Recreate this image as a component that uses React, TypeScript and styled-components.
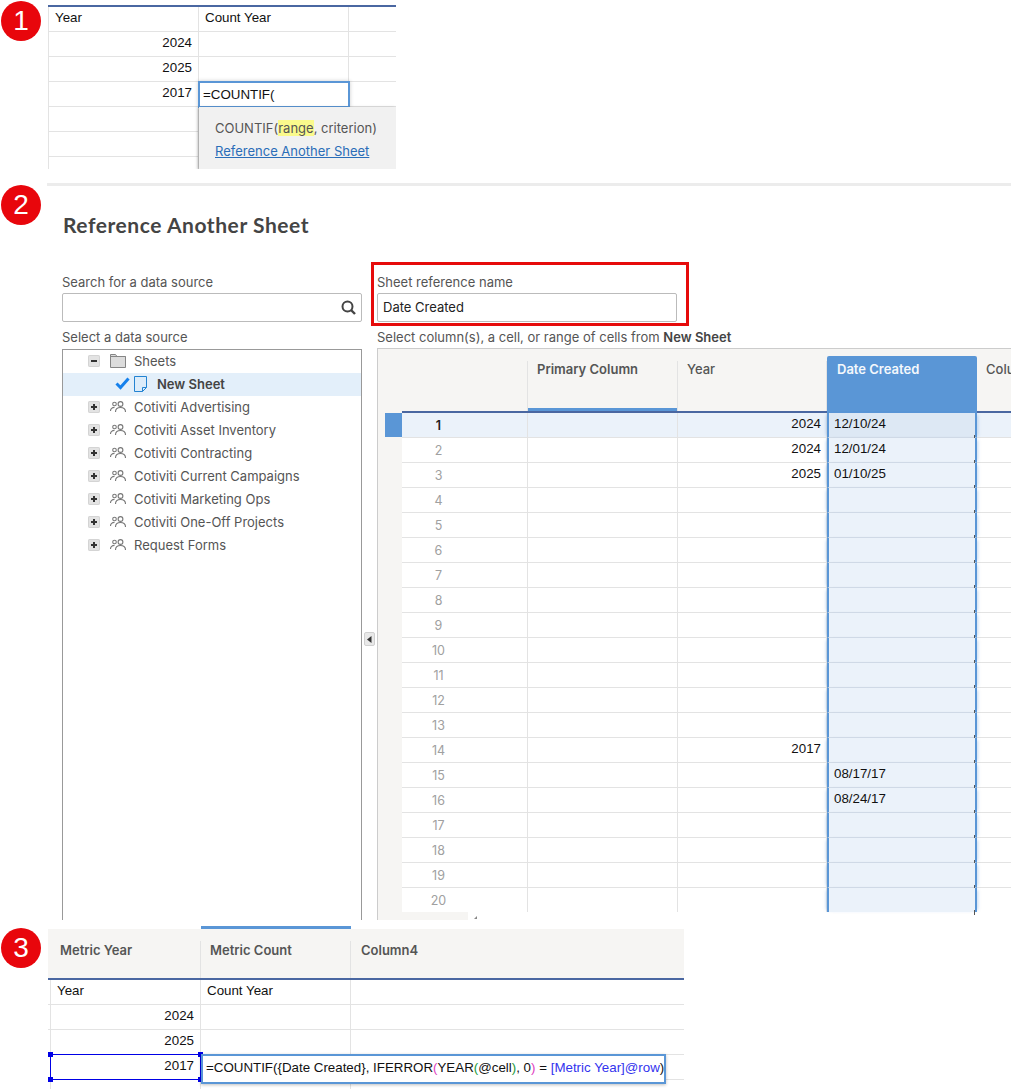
import styled, { createGlobalStyle } from "styled-components";

const CELL_FONT = `"Liberation Sans", Arial, sans-serif`;
const UI_FONT = `Inter, "Noto Sans", sans-serif`;
const BLUE = "#5a96d6";
const NAVY = "#4a67a1";
const LINE = "#e3e3e3";
const HEAD = "#f6f5f3";

const GlobalStyle = createGlobalStyle`
  html, body {
    margin: 0;
    padding: 0;
    background: #fff;
  }
  * {
    box-sizing: border-box;
  }
`;

const PlusBox = ({ minus }: { minus?: boolean }) => (
  <StyledToggle>
    <svg width="12" height="12" viewBox="0 0 12 12">
      <path d="M3 6h6" stroke="#333" strokeWidth="2" />
      {!minus && <path d="M6 3v6" stroke="#333" strokeWidth="2" />}
    </svg>
  </StyledToggle>
);

const FolderIcon = () => (
  <svg width="16" height="14" viewBox="0 0 16 14">
    <path d="M.5.5h5l1.5 2h8.500v11H.5z" fill="#dcdcdc" stroke="#858585" />
    <path d="M.5 2.500h15" stroke="#858585" />
  </svg>
);

const PeopleIcon = () => (
  <svg width="16" height="12" viewBox="0 0 16 12" fill="none" stroke="#777" strokeWidth="1.100">
    <circle cx="4.5" cy="3" r="1.8" />
    <circle cx="10.5" cy="3" r="2.4" />
    <path d="M.5 10c0-2.400 1.600-3.600 4-3.600" />
    <path d="M5.500 11c0-3 2-4.500 5-4.500s5 1.500 5 4.500" />
  </svg>
);

const CheckIcon = () => (
  <svg width="15" height="13" viewBox="0 0 15 13">
    <path d="M1.500 6.500l4 4 8-9" fill="none" stroke="#1580ec" strokeWidth="3" />
  </svg>
);

const SheetIcon = () => (
  <svg width="13" height="16" viewBox="0 0 13 16">
    <path d="M.5.5h12v11l-4 4H.5z" fill="#dcecfa" stroke="#2383d2" />
    <path d="M12.500 11.500h-4v4" fill="none" stroke="#2383d2" />
  </svg>
);

const SearchIcon = () => (
  <svg width="15" height="15" viewBox="0 0 15 15" fill="none" stroke="#444" strokeWidth="2">
    <circle cx="6.500" cy="6.500" r="5" />
    <path d="M10 10l4 4" strokeWidth="2.400" />
  </svg>
);

const workspaces = [
  "Cotiviti Advertising",
  "Cotiviti Asset Inventory",
  "Cotiviti Contracting",
  "Cotiviti Current Campaigns",
  "Cotiviti Marketing Ops",
  "Cotiviti One-Off Projects",
  "Request Forms",
];

const years: Record<number, string> = { 1: "2024", 2: "2024", 3: "2025", 14: "2017" };
const dates: Record<number, string> = { 1: "12/10/24", 2: "12/01/24", 3: "01/10/25", 15: "08/17/17", 16: "08/24/17" };
const rowNumbers = Array.from({ length: 20 }, (_, i) => i + 1);

const App = () => {
  return (
    <StyledPage>
      <GlobalStyle />

      <StyledFirstStep>
        <StyledBadge>1</StyledBadge>
        <StyledSheetTable>
          <StyledSheetRow>
            <StyledSheetCell $first>Year</StyledSheetCell>
            <StyledSheetCell>Count Year</StyledSheetCell>
            <StyledSheetCell $last />
          </StyledSheetRow>
          <StyledSheetRow>
            <StyledSheetCell $first $right>2024</StyledSheetCell>
            <StyledSheetCell />
            <StyledSheetCell $last />
          </StyledSheetRow>
          <StyledSheetRow>
            <StyledSheetCell $first $right>2025</StyledSheetCell>
            <StyledSheetCell />
            <StyledSheetCell $last />
          </StyledSheetRow>
          <StyledSheetRow>
            <StyledSheetCell $first $right>2017</StyledSheetCell>
            <StyledSheetCell>
              <StyledCellEditor>=COUNTIF(</StyledCellEditor>
              <StyledHintPopup>
                <div>
                  COUNTIF(<StyledHintMark>range</StyledHintMark>, criterion)
                </div>
                <StyledHintLink>Reference Another Sheet</StyledHintLink>
              </StyledHintPopup>
            </StyledSheetCell>
            <StyledSheetCell $last />
          </StyledSheetRow>
          {[0, 1, 2].map((i) => (
            <StyledSheetRow key={i}>
              <StyledSheetCell $first />
              <StyledSheetCell />
              <StyledSheetCell $last />
            </StyledSheetRow>
          ))}
        </StyledSheetTable>
      </StyledFirstStep>

      <StyledSecondStep>
        <StyledBadge>2</StyledBadge>
        <StyledTitle>Reference Another Sheet</StyledTitle>
        <StyledPanels>
          <div>
            <StyledLabel>Search for a data source</StyledLabel>
            <StyledInput>
              <StyledSearchSlot>
                <SearchIcon />
              </StyledSearchSlot>
            </StyledInput>
          </div>
          <div />
          <StyledRedBox>
            <StyledLabel>Sheet reference name</StyledLabel>
            <StyledInput>Date Created</StyledInput>
          </StyledRedBox>

          <div>
            <StyledPickLabel>Select a data source</StyledPickLabel>
            <StyledTree>
              <StyledTreeRow>
                <PlusBox minus />
                <StyledTreeIcon>
                  <FolderIcon />
                </StyledTreeIcon>
                Sheets
              </StyledTreeRow>
              <StyledSelectedRow>
                <CheckIcon />
                <SheetIcon />
                New Sheet
              </StyledSelectedRow>
              {workspaces.map((name) => (
                <StyledTreeRow key={name}>
                  <PlusBox />
                  <StyledTreeIcon>
                    <PeopleIcon />
                  </StyledTreeIcon>
                  {name}
                </StyledTreeRow>
              ))}
            </StyledTree>
          </div>

          <StyledCollapseSlot>
            <StyledCollapse>
              <svg width="5" height="7" viewBox="0 0 5 7">
                <path d="M4.500 0v7L0 3.500z" fill="#333" />
              </svg>
            </StyledCollapse>
          </StyledCollapseSlot>

          <div>
            <StyledPickLabel>
              Select column(s), a cell, or range of cells from <b>New Sheet</b>
            </StyledPickLabel>
            <StyledGrid>
              <StyledGridHeader>
                <StyledGutter />
                <StyledHeadCell $width={126}>
                  <StyledHeadLabel />
                </StyledHeadCell>
                <StyledHeadCell $width={150} $bar>
                  <StyledHeadLabel>Primary Column</StyledHeadLabel>
                </StyledHeadCell>
                <StyledHeadCell $width={149}>
                  <StyledHeadLabel $plain>Year</StyledHeadLabel>
                </StyledHeadCell>
                <StyledDateHead>Date Created</StyledDateHead>
                <StyledHeadCell $width={34}>
                  <StyledHeadLabel $plain $open>Colu</StyledHeadLabel>
                </StyledHeadCell>
              </StyledGridHeader>
              {rowNumbers.map((n) => (
                <StyledGridRow key={n}>
                  <StyledGutter>{n === 1 && <StyledRowMarker />}</StyledGutter>
                  <StyledRowNumber $active={n === 1}>{n}</StyledRowNumber>
                  <StyledGridCell $width={53} $active={n === 1} />
                  <StyledGridCell $width={150} $active={n === 1} />
                  <StyledGridCell $width={149} $active={n === 1} $right>
                    {years[n]}
                  </StyledGridCell>
                  <StyledDateCell $active={n === 1}>{dates[n]}</StyledDateCell>
                  <StyledGridCell $width={34} $active={n === 1} />
                </StyledGridRow>
              ))}
              <StyledGridFooter>
                <StyledResizeTip />
              </StyledGridFooter>
            </StyledGrid>
          </div>
        </StyledPanels>
      </StyledSecondStep>

      <StyledThirdStep>
        <StyledBadge>3</StyledBadge>
        <StyledMetricHeader>
          <StyledMetricHead $width={153} $lead>
            <StyledMetricLabel>Metric Year</StyledMetricLabel>
          </StyledMetricHead>
          <StyledMetricHead $width={150} $bar>
            <StyledMetricLabel>Metric Count</StyledMetricLabel>
          </StyledMetricHead>
          <StyledMetricHead $width={333}>
            <StyledMetricLabel $open>Column4</StyledMetricLabel>
          </StyledMetricHead>
        </StyledMetricHeader>
        <StyledMetricRow>
          <StyledSheetCell $first>Year</StyledSheetCell>
          <StyledSheetCell>Count Year</StyledSheetCell>
          <StyledSheetCell $last />
        </StyledMetricRow>
        <StyledMetricRow>
          <StyledSheetCell $first $right>2024</StyledSheetCell>
          <StyledSheetCell />
          <StyledSheetCell $last />
        </StyledMetricRow>
        <StyledMetricRow>
          <StyledSheetCell $first $right>2025</StyledSheetCell>
          <StyledSheetCell />
          <StyledSheetCell $last />
        </StyledMetricRow>
        <StyledMetricRow>
          <StyledSheetCell $first $right>
            2017
            <StyledRangeBox>
              <StyledHandle $corner="tl" />
              <StyledHandle $corner="tr" />
              <StyledHandle $corner="bl" />
              <StyledHandle $corner="br" />
            </StyledRangeBox>
          </StyledSheetCell>
          <StyledSheetCell>
            <StyledFormulaEditor>
              =COUNTIF({"{"}Date Created{"}"}, IFERROR<StyledPink>(</StyledPink>YEAR
              <StyledGreen>(</StyledGreen>@cell<StyledGreen>)</StyledGreen>, 0<StyledPink>)</StyledPink> ={" "}
              <StyledRefBlue>[Metric Year]@row</StyledRefBlue>)
            </StyledFormulaEditor>
          </StyledSheetCell>
          <StyledSheetCell $last />
        </StyledMetricRow>
        <StyledMetricRow>
          <StyledSheetCell $first />
          <StyledSheetCell />
          <StyledSheetCell $last />
        </StyledMetricRow>
      </StyledThirdStep>
    </StyledPage>
  );
};

const StyledPage = styled.div`
  width: 1011px;
  height: 1089px;
  overflow: hidden;
  display: flex;
  flex-direction: column;
  background: #fff;
`;

const StyledBadge = styled.div`
  position: absolute;
  left: 1px;
  top: 1px;
  width: 40px;
  height: 40px;
  border-radius: 50%;
  background: #e8060c;
  color: #fff;
  display: flex;
  align-items: center;
  justify-content: center;
  font-family: ${CELL_FONT};
  font-size: 28px;
  z-index: 5;
`;

const StyledFirstStep = styled.section`
  position: relative;
  flex: none;
  height: 183px;
  padding: 5px 0 0 48px;
`;

const StyledSheetTable = styled.div`
  width: 348px;
  height: 164px;
  overflow: hidden;
  border-top: 2px solid ${NAVY};
`;

const StyledSheetRow = styled.div`
  display: flex;
  height: 25px;
  border-bottom: 1px solid ${LINE};
`;

const StyledSheetCell = styled.div<{ $first?: boolean; $last?: boolean; $right?: boolean }>`
  position: relative;
  flex: ${(p) => (p.$last ? "1" : "none")};
  width: ${(p) => (p.$first ? "151px" : "150px")};
  padding: 0 6px;
  border-left: ${(p) => (p.$first ? `1px solid ${LINE}` : "none")};
  border-right: ${(p) => (p.$last ? "none" : `1px solid ${LINE}`)};
  font-family: ${CELL_FONT};
  font-size: 13.33px;
  line-height: 21px;
  color: #111;
  text-align: ${(p) => (p.$right ? "right" : "left")};
`;

const StyledCellEditor = styled.div`
  position: absolute;
  left: -1px;
  top: -1px;
  width: 152px;
  height: 27px;
  padding: 1px 3px;
  background: #fff;
  border: 2px solid ${BLUE};
  box-shadow: 0 0 4px rgba(0, 0, 0, 0.2);
  line-height: 21px;
  z-index: 2;
`;

const StyledHintPopup = styled.div`
  position: absolute;
  left: 0;
  top: 25px;
  width: 197px;
  height: 62px;
  padding: 10px 16px;
  background: #f1f1f1;
  box-shadow: -1px 1px 3px rgba(0, 0, 0, 0.35);
  font-family: ${UI_FONT};
  font-size: 13px;
  line-height: 23px;
  color: #555;
  z-index: 3;
`;

const StyledHintMark = styled.span`
  background: #fafa8c;
`;

const StyledHintLink = styled.div`
  color: #2a6db8;
  text-decoration: underline;
`;

const StyledSecondStep = styled.section`
  position: relative;
  flex: none;
  height: 743px;
  margin-left: 47px;
  padding-left: 15px;
  border-top: 3px solid #ececec;
  ${StyledBadge} {
    left: -46px;
    top: -1px;
  }
`;

const StyledTitle = styled.h1`
  margin: 26px 0 0 1px;
  font-family: Lato, sans-serif;
  font-size: 21px;
  line-height: 26px;
  font-weight: 700;
  letter-spacing: 0.55px;
  color: #444;
`;

const StyledPanels = styled.div`
  display: grid;
  grid-template-columns: 300px 15px 634px;
  grid-template-rows: 58px auto;
  margin-top: 34px;
`;

const StyledLabel = styled.div`
  height: 21px;
  font-family: ${UI_FONT};
  font-size: 13px;
  line-height: 20px;
  color: #555;
`;

const StyledInput = styled.div`
  display: flex;
  align-items: center;
  justify-content: space-between;
  width: 300px;
  height: 29px;
  padding: 0 5px 2px;
  border: 1px solid #bbb;
  border-radius: 2px;
  font-family: ${UI_FONT};
  font-size: 13px;
  color: #222;
`;

const StyledSearchSlot = styled.span`
  display: flex;
  margin: 2px 0 0 auto;
`;

const StyledRedBox = styled.div`
  width: 318px;
  height: 64px;
  margin: -10px 0 0 -6px;
  padding: 7px 9px 0 3px;
  border: 3px solid #e60b0b;
`;

const StyledPickLabel = styled.div`
  height: 19px;
  font-family: ${UI_FONT};
  font-size: 13px;
  line-height: 14px;
  color: #555;
  white-space: nowrap;
  b {
    font-weight: 600;
    color: #444;
  }
`;

const StyledTree = styled.div`
  height: 571px;
  border: 1px solid #999;
  border-bottom: none;
`;

const StyledTreeRow = styled.div`
  display: flex;
  align-items: center;
  height: 23px;
  padding: 0 0 2px 25px;
  font-family: ${UI_FONT};
  font-size: 13px;
  color: #555;
`;

const StyledSelectedRow = styled(StyledTreeRow)`
  gap: 4px;
  padding-left: 52px;
  background: #e3effa;
  font-weight: 600;
  color: #444;
  svg:last-of-type {
    margin-right: 6px;
  }
`;

const StyledToggle = styled.span`
  display: flex;
  width: 12px;
  height: 12px;
  background: #e3e3e3;
  border-radius: 2px;
  box-shadow: inset 0 0 0 1px #d4d4d4;
`;

const StyledTreeIcon = styled.span`
  display: flex;
  width: 16px;
  margin: 0 8px 0 10px;
`;

const StyledCollapseSlot = styled.div`
  padding: 302px 0 0 2px;
`;

const StyledCollapse = styled.div`
  display: flex;
  align-items: center;
  justify-content: center;
  width: 11px;
  height: 14px;
  background: #e8e8e8;
  border: 1px solid #d0d0d0;
  border-radius: 2px;
`;

const StyledGrid = styled.div`
  height: 572px;
  margin-top: -1px;
  overflow: hidden;
  border-top: 1px solid #ccc;
  border-left: 1px solid #ccc;
  background: #fff;
`;

const StyledGridHeader = styled.div`
  display: flex;
  height: 64px;
  background: ${HEAD};
`;

const StyledHeadCell = styled.div<{ $width: number; $bar?: boolean }>`
  flex: none;
  width: ${(p) => p.$width}px;
  padding-top: 12px;
  border-bottom: 2px solid ${NAVY};
  box-shadow: ${(p) => (p.$bar ? `inset 0 -5px 0 -2px ${BLUE}` : "none")};
`;

const StyledHeadLabel = styled.div<{ $plain?: boolean; $open?: boolean }>`
  height: 100%;
  padding: 0 0 0 9px;
  border-right: ${(p) => (p.$open ? "none" : `1px solid ${LINE}`)};
  font-family: ${UI_FONT};
  font-size: 13px;
  line-height: 16px;
  font-weight: ${(p) => (p.$plain ? 500 : 600)};
  color: #555;
  white-space: nowrap;
`;

const StyledDateHead = styled.div`
  flex: none;
  width: 150px;
  height: 57px;
  margin-top: 7px;
  padding: 5px 10px;
  background: ${BLUE};
  border-radius: 2px 2px 0 0;
  font-family: ${UI_FONT};
  font-size: 13px;
  line-height: 16px;
  font-weight: 600;
  color: #f4f8fc;
`;

const StyledGridRow = styled.div`
  display: flex;
  height: 25px;
  &:nth-last-child(2) {
    height: 24px;
    & > * {
      border-bottom: none;
    }
  }
`;

const StyledGutter = styled.div`
  flex: none;
  width: 24px;
  padding-left: 7px;
  background: ${HEAD};
`;

const StyledRowMarker = styled.div`
  height: 24px;
  background: ${BLUE};
`;

const StyledRowNumber = styled.div<{ $active?: boolean }>`
  flex: none;
  width: 73px;
  text-align: center;
  font-family: ${UI_FONT};
  font-size: 12.5px;
  line-height: 25px;
  font-weight: ${(p) => (p.$active ? 600 : 400)};
  color: ${(p) => (p.$active ? "#222" : "#a0a0a0")};
  border-bottom: 1px solid ${LINE};
  background: ${(p) => (p.$active ? "#ebf2fa" : "#fff")};
`;

const StyledGridCell = styled.div<{ $width: number; $active?: boolean; $right?: boolean }>`
  flex: none;
  width: ${(p) => p.$width}px;
  padding: ${(p) => (p.$right ? "0 5px 0 0" : "0 6px")};
  border-bottom: 1px solid ${LINE};
  border-right: ${(p) => (p.$width === 34 ? "none" : `1px solid ${LINE}`)};
  background: ${(p) => (p.$active ? "#ebf2fa" : "#fff")};
  font-family: ${CELL_FONT};
  font-size: 13.33px;
  line-height: 21px;
  color: #111;
  text-align: ${(p) => (p.$right ? "right" : "left")};
`;

const StyledDateCell = styled.div<{ $active?: boolean }>`
  position: relative;
  flex: none;
  width: 150px;
  padding: 0 5px;
  background: ${(p) => (p.$active ? "#dde8f4" : "#ebf2fa")};
  border-left: 2px solid ${BLUE};
  border-right: 2px solid ${BLUE};
  border-bottom: 1px solid #d5dde6;
  box-shadow: -3px 0 3px -2px rgba(90, 150, 214, 0.35), 3px 0 3px -2px rgba(90, 150, 214, 0.35);
  font-family: ${CELL_FONT};
  font-size: 13.33px;
  line-height: 21px;
  color: #111;
  z-index: 1;
  &::after {
    content: "";
    position: absolute;
    right: 0;
    bottom: -3px;
    width: 1px;
    height: 5px;
    background: #555;
  }
`;

const StyledGridFooter = styled.div`
  position: relative;
  width: 90px;
  height: 10px;
  background: ${HEAD};
`;

const StyledResizeTip = styled.div`
  position: absolute;
  left: 96px;
  top: 4px;
  width: 0;
  height: 0;
  border-left: 3px solid transparent;
  border-bottom: 3px solid #888;
`;

const StyledThirdStep = styled.section`
  position: relative;
  flex: none;
  ${StyledBadge} {
    top: 2px;
  }
`;

const StyledMetricHeader = styled.div`
  display: flex;
  margin-left: 48px;
  width: 636px;
  height: 54px;
  border-bottom: 2px solid ${NAVY};
`;

const StyledMetricHead = styled.div<{ $width: number; $bar?: boolean; $lead?: boolean }>`
  width: ${(p) => p.$width}px;
  padding: 15px 0 0 ${(p) => (p.$lead ? 3 : 0)}px;
  background: linear-gradient(${(p) => (p.$bar ? BLUE : "#fff")} 3px, ${HEAD} 3px);
`;

const StyledMetricLabel = styled.div<{ $open?: boolean }>`
  height: 100%;
  padding: 0 10px 0 ${(p) => (p.$open ? 10 : 9)}px;
  border-right: ${(p) => (p.$open ? "none" : `1px solid ${LINE}`)};
  font-family: ${UI_FONT};
  font-size: 13px;
  line-height: 18px;
  font-weight: 600;
  color: #555;
`;

const StyledMetricRow = styled(StyledSheetRow)`
  margin-left: 48px;
  width: 636px;
  padding-left: 2px;
`;

const StyledRangeBox = styled.div`
  position: absolute;
  left: -1px;
  top: -1px;
  right: -1px;
  bottom: -1px;
  border: 1px solid #0000e6;
  z-index: 2;
`;

const cornerPlace: Record<string, string> = {
  tl: "left: -3px; top: -3px;",
  tr: "right: -3px; top: -3px;",
  bl: "left: -3px; bottom: -3px;",
  br: "right: -3px; bottom: -3px;",
};

const StyledHandle = styled.span<{ $corner: string }>`
  position: absolute;
  width: 5px;
  height: 5px;
  background: #0000e6;
  ${(p) => cornerPlace[p.$corner]}
`;

const StyledFormulaEditor = styled.div`
  position: absolute;
  left: 0;
  top: -1px;
  width: 465px;
  height: 30px;
  padding: 1px 3px;
  background: #fff;
  border: 2px solid ${BLUE};
  box-shadow: 0 1px 3px rgba(0, 0, 0, 0.25);
  white-space: nowrap;
  line-height: 21px;
  z-index: 3;
`;

const StyledPink = styled.span`
  color: #e040c0;
`;

const StyledGreen = styled.span`
  color: #1c9a3c;
`;

const StyledRefBlue = styled.span`
  color: #3333ee;
`;

export default App;
